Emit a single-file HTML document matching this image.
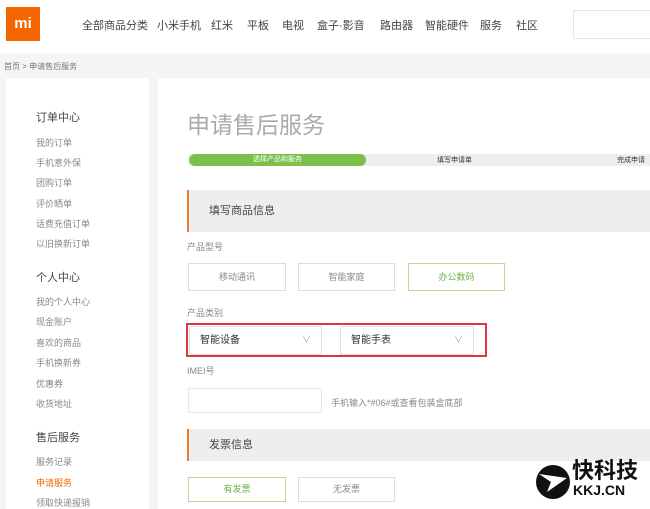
<!DOCTYPE html>
<html><head><meta charset="utf-8"><style>
*{margin:0;padding:0;box-sizing:border-box}
body{width:650px;height:509px;overflow:hidden;background:#f5f5f5;font-family:"Liberation Sans","Noto Sans CJK SC",sans-serif;position:relative;color:#666}
.a{position:absolute;white-space:nowrap}
#hdr{left:0;top:0;width:650px;height:53px;background:#fff}
.nav{font-size:11px;color:#444;top:17px}
.sb{font-size:9px;color:#888}
.sh{font-size:11px;color:#444}
.btn{height:28px;border:1px solid #ddd;font-size:9px;color:#888;text-align:center;line-height:26px;background:#fff}
.sec{left:187px;width:463px;background:#eee;border-left:2px solid #f07a2c;font-size:11px;color:#444;padding-left:20px}
.sel{height:29px;border:1px solid #e0e0e0;background:#fff;font-size:10px;color:#333;padding-left:10px;line-height:27px}
.sel i{position:absolute;right:10px;top:0;font-style:normal;color:#aaa;font-size:9px}
</style></head><body>
<div id="hdr" class="a"></div>
<div class="a" style="left:6px;top:7px;width:34px;height:34px;background:#f56600;color:#fff;font-weight:bold;font-size:15px;text-align:center;line-height:34px">mi</div>
<div class="a nav" style="left:82px">全部商品分类</div>
<div class="a nav" style="left:157px">小米手机</div>
<div class="a nav" style="left:211px">红米</div>
<div class="a nav" style="left:247px">平板</div>
<div class="a nav" style="left:282px">电视</div>
<div class="a nav" style="left:317px">盒子·影音</div>
<div class="a nav" style="left:380px">路由器</div>
<div class="a nav" style="left:425px">智能硬件</div>
<div class="a nav" style="left:480px">服务</div>
<div class="a nav" style="left:516px">社区</div>
<div class="a" style="left:573px;top:10px;width:100px;height:29px;border:1px solid #e6e6e6;background:#fff"></div>
<div class="a" style="left:4px;top:61px;font-size:8px;color:#777">首页 &gt; 申请售后服务</div>
<div class="a" style="left:6px;top:78px;width:143px;height:431px;background:#fff"></div>
<div class="a" style="left:158px;top:78px;width:492px;height:431px;background:#fff"></div>
<div class="a sh" style="left:36px;top:109px">订单中心</div>
<div class="a sb" style="left:36px;top:136px">我的订单</div>
<div class="a sb" style="left:36px;top:156px">手机意外保</div>
<div class="a sb" style="left:36px;top:176px">团购订单</div>
<div class="a sb" style="left:36px;top:197px">评价晒单</div>
<div class="a sb" style="left:36px;top:217px">话费充值订单</div>
<div class="a sb" style="left:36px;top:237px">以旧换新订单</div>
<div class="a sh" style="left:36px;top:269px">个人中心</div>
<div class="a sb" style="left:36px;top:295px">我的个人中心</div>
<div class="a sb" style="left:36px;top:315px">现金账户</div>
<div class="a sb" style="left:36px;top:336px">喜欢的商品</div>
<div class="a sb" style="left:36px;top:356px">手机换新券</div>
<div class="a sb" style="left:36px;top:377px">优惠券</div>
<div class="a sb" style="left:36px;top:397px">收货地址</div>
<div class="a sh" style="left:36px;top:429px">售后服务</div>
<div class="a sb" style="left:36px;top:455px">服务记录</div>
<div class="a sb" style="left:36px;top:476px;color:#f56600">申请服务</div>
<div class="a sb" style="left:36px;top:496px">领取快递报销</div>
<div class="a" style="left:187px;top:106px;font-size:23px;color:#aaa">申请售后服务</div>
<div class="a" style="left:189px;top:154px;width:461px;height:12px;background:#eee"></div>
<div class="a" style="left:189px;top:154px;width:177px;height:12px;background:#7cc04b;border-radius:6px;color:#fff;font-size:7px;text-align:center;line-height:12px">选择产品和服务</div>
<div class="a" style="left:437px;top:155px;font-size:7px;color:#333">填写申请单</div>
<div class="a" style="left:617px;top:155px;font-size:7px;color:#333">完成申请</div>
<div class="a sec" style="top:190px;height:42px;line-height:42px">填写商品信息</div>
<div class="a sb" style="left:187px;top:240px">产品型号</div>
<div class="a btn" style="left:188px;top:263px;width:98px">移动通讯</div>
<div class="a btn" style="left:298px;top:263px;width:97px">智能家庭</div>
<div class="a btn" style="left:408px;top:263px;width:97px;border-color:#b5dc96;color:#6ab24a">办公数码</div>
<div class="a sb" style="left:187px;top:306px">产品类别</div>
<div class="a" style="left:186px;top:323px;width:301px;height:34px;border:2px solid #d9363e"></div>
<div class="a sel" style="left:189px;top:326px;width:133px">智能设备<i>∨</i></div>
<div class="a sel" style="left:340px;top:326px;width:134px">智能手表<i>∨</i></div>
<div class="a sb" style="left:187px;top:364px">IMEI号</div>
<div class="a" style="left:188px;top:388px;width:134px;height:25px;border:1px solid #e6e6e6"></div>
<div class="a sb" style="left:331px;top:396px">手机输入*#06#或查看包装盒底部</div>
<div class="a sec" style="top:429px;height:32px;line-height:32px">发票信息</div>
<div class="a btn" style="left:188px;top:477px;width:98px;height:25px;line-height:23px;border-color:#b5dc96;color:#6ab24a">有发票</div>
<div class="a btn" style="left:298px;top:477px;width:97px;height:25px;line-height:23px">无发票</div>
<svg class="a" style="left:533px;top:462px" width="40" height="40" viewBox="0 0 40 40"><circle cx="20" cy="20" r="17" fill="#111"/><path d="M6 12 L34 16 L14 30 L18 20 Z" fill="#fff"/></svg>
<div class="a" style="left:572px;top:459px;font-size:22px;font-weight:bold;color:#111;line-height:24px">快科技</div>
<div class="a" style="left:573px;top:482px;font-size:14px;font-weight:bold;color:#111;line-height:16px">KKJ.CN</div>
</body></html>
